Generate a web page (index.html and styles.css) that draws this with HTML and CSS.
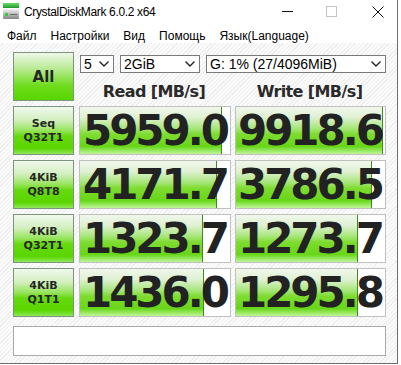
FILE: index.html
```html
<!DOCTYPE html>
<html lang="ru">
<head>
    <meta charset="UTF-8">
    <title>CrystalDiskMark 6.0.2 x64</title>
    <link rel="stylesheet" href="styles.css">
</head>
<body>
    <div class="window">
        <div class="titlebar">
            <svg class="app-icon" width="16" height="16" viewBox="0 0 16 16">
                <defs>
                    <linearGradient id="gTop" x1="0" y1="0" x2="0" y2="1">
                        <stop offset="0" stop-color="#66e066"/>
                        <stop offset="1" stop-color="#1e9a2a"/>
                    </linearGradient>
                    <linearGradient id="gBody" x1="0" y1="0" x2="0" y2="1">
                        <stop offset="0" stop-color="#f2f2f2"/>
                        <stop offset="1" stop-color="#858585"/>
                    </linearGradient>
                </defs>
                <rect x="0" y="0" width="16" height="5" fill="url(#gTop)"/>
                <rect x="0" y="6" width="16" height="10" rx="1" fill="url(#gBody)"/>
                <rect x="2" y="10" width="3" height="3" fill="#3cc83c"/>
                <rect x="7" y="11" width="7" height="1" fill="#6a6a6a"/>
            </svg>
            <span class="title">CrystalDiskMark 6.0.2 x64</span>
            <div class="controls">
                <svg class="ctl-min" width="11" height="1" viewBox="0 0 11 1"><rect width="11" height="1" fill="#111"/></svg>
                <svg class="ctl-max" width="11" height="11" viewBox="0 0 11 11"><rect x="0.5" y="0.5" width="10" height="10" fill="none" stroke="#c4c4c4"/></svg>
                <svg class="ctl-close" width="12" height="12" viewBox="0 0 12 12"><path d="M0.5 0.5 L11.5 11.5 M11.5 0.5 L0.5 11.5" stroke="#111" stroke-width="1"/></svg>
            </div>
        </div>

        <div class="menubar">
            <span>Файл</span>
            <span>Настройки</span>
            <span>Вид</span>
            <span>Помощь</span>
            <span>Язык(Language)</span>
        </div>

        <div class="main">
            <div class="grid">
                <button class="btn btn-all">All</button>
                <div class="top">
                    <div class="selects">
                        <div class="select sel-count"><span>5</span><svg width="10" height="6" viewBox="0 0 10 6"><polyline points="0.5,0.5 5,5 9.5,0.5" fill="none" stroke="#222" stroke-width="1.4"/></svg></div>
                        <div class="select sel-size"><span>2GiB</span><svg width="10" height="6" viewBox="0 0 10 6"><polyline points="0.5,0.5 5,5 9.5,0.5" fill="none" stroke="#222" stroke-width="1.4"/></svg></div>
                        <div class="select sel-drive"><span>G: 1% (27/4096MiB)</span><svg width="10" height="6" viewBox="0 0 10 6"><polyline points="0.5,0.5 5,5 9.5,0.5" fill="none" stroke="#222" stroke-width="1.4"/></svg></div>
                    </div>
                    <div class="heads">
                        <div>Read [MB/s]</div>
                        <div>Write [MB/s]</div>
                    </div>
                </div>

                <button class="btn btn-test">Seq<br>Q32T1</button>
                <div class="result"><div class="bar" style="width:94.7%"></div><span class="val">5959.0</span></div>
                <div class="result"><div class="bar" style="width:98.6%"></div><span class="val">9918.6</span></div>

                <button class="btn btn-test">4KiB<br>Q8T8</button>
                <div class="result"><div class="bar" style="width:91.3%"></div><span class="val">4171.7</span></div>
                <div class="result"><div class="bar" style="width:91%"></div><span class="val">3786.5</span></div>

                <button class="btn btn-test">4KiB<br>Q32T1</button>
                <div class="result"><div class="bar" style="width:82%"></div><span class="val">1323.7</span></div>
                <div class="result"><div class="bar" style="width:81.9%"></div><span class="val">1273.7</span></div>

                <button class="btn btn-test">4KiB<br>Q1T1</button>
                <div class="result"><div class="bar" style="width:82.6%"></div><span class="val">1436.0</span></div>
                <div class="result"><div class="bar" style="width:81.9%"></div><span class="val">1295.8</span></div>
            </div>
            <div class="comment"></div>
        </div>
    </div>
</body>
</html>
```

FILE: styles.css
```css
body {
    margin: 0;
    background-color: #ffffff;
    font-family: "Liberation Sans", Arial, sans-serif;
    color: #000;
}
.window {
    width: 397px;
    height: 363px;
    border-right: 1px solid #6e6e6e;
    border-bottom: 1px solid #6e6e6e;
    display: flex;
    flex-direction: column;
}
.titlebar {
    height: 29px;
    box-sizing: border-box;
    padding-top: 3px;
    display: flex;
    align-items: flex-start;
    background-color: #ffffff;
}
.app-icon {
    margin-left: 3px;
    flex: none;
}
.title {
    margin-left: 5px;
    margin-top: 2px;
    font-size: 12px;
    line-height: 14px;
    letter-spacing: -0.35px;
}
.controls {
    margin-left: auto;
    padding-right: 13px;
    display: flex;
    align-items: center;
    height: 17px;
}
.ctl-min {
    margin-right: 33px;
}
.ctl-max {
    margin-right: 35px;
}
.menubar {
    height: 14px;
    display: flex;
    font-size: 12px;
    line-height: 14px;
    background-color: #ffffff;
}
.menubar span {
    padding: 0 7px;
}
.main {
    flex: 1;
    padding: 9px 11px 0 13px;
    background-color: #fbfbfb;
    background-image: repeating-linear-gradient(135deg, #fbfbfb 0 2px, #eeeeee 2px 3px);
}
.grid {
    display: grid;
    grid-template-columns: 62px 152px 151px;
    grid-template-rows: repeat(5, 49px);
    column-gap: 4px;
    row-gap: 5px;
}
.btn {
    width: 61px;
    height: 49px;
    padding: 0;
    border: 1px solid #7d947d;
    color: #262626;
    font-family: "DejaVu Sans", Verdana, sans-serif;
    font-weight: bold;
    background: linear-gradient(to bottom, #f2f8ee 0%, #d2efbe 28%, #96e45c 50%, #66d90e 62%, #5ad600 88%, #8fe85a 100%);
}
.btn-all {
    font-size: 15px;
    background: linear-gradient(to bottom, #eef7e8 0%, #b6ea90 35%, #6edc1c 70%, #58d600 100%);
}
.btn-test {
    font-size: 11px;
    line-height: 14px;
}
.top {
    grid-column: 2 / 4;
    padding-top: 3px;
}
.selects {
    display: flex;
    gap: 6px;
    margin-left: 1px;
}
.select {
    height: 18px;
    box-sizing: border-box;
    border: 1px solid #7a7a7a;
    background-color: #ffffff;
    display: flex;
    align-items: center;
    justify-content: space-between;
    padding: 0 4px 0 3px;
    font-size: 14px;
}
.sel-count {
    width: 34px;
}
.sel-size {
    width: 80px;
}
.sel-drive {
    flex: 1;
}
.heads {
    display: grid;
    grid-template-columns: 152px 151px;
    column-gap: 4px;
    margin-top: 9px;
    margin-left: -1px;
    font-family: "DejaVu Sans", Verdana, sans-serif;
    font-weight: bold;
    font-size: 16px;
    line-height: 19px;
    letter-spacing: -0.6px;
    color: #2a2a2a;
    text-align: center;
}
.result {
    position: relative;
    border: 1px solid #c0c0c0;
    background-color: #ffffff;
    display: flex;
    align-items: center;
    justify-content: flex-end;
    overflow: hidden;
}
.bar {
    position: absolute;
    left: 0;
    top: 0;
    bottom: 0;
    box-sizing: border-box;
    border-right: 1px solid #3d8c1d;
    background: linear-gradient(to bottom, #f0f7ec 0%, #dff1d2 22%, #a8e67c 45%, #7edc30 58%, #68d618 84%, #92e85a 92%, #c2f49a 100%);
}
.val {
    position: relative;
    padding-right: 3px;
    padding-top: 1px;
    font-family: "DejaVu Sans", Verdana, sans-serif;
    font-weight: bold;
    font-size: 42px;
    line-height: 42px;
    letter-spacing: -3px;
    color: #222222;
}
.comment {
    margin-top: 9px;
    width: 373px;
    height: 30px;
    box-sizing: border-box;
    border: 1px solid #a9a9a9;
    background-color: #ffffff;
}
```
